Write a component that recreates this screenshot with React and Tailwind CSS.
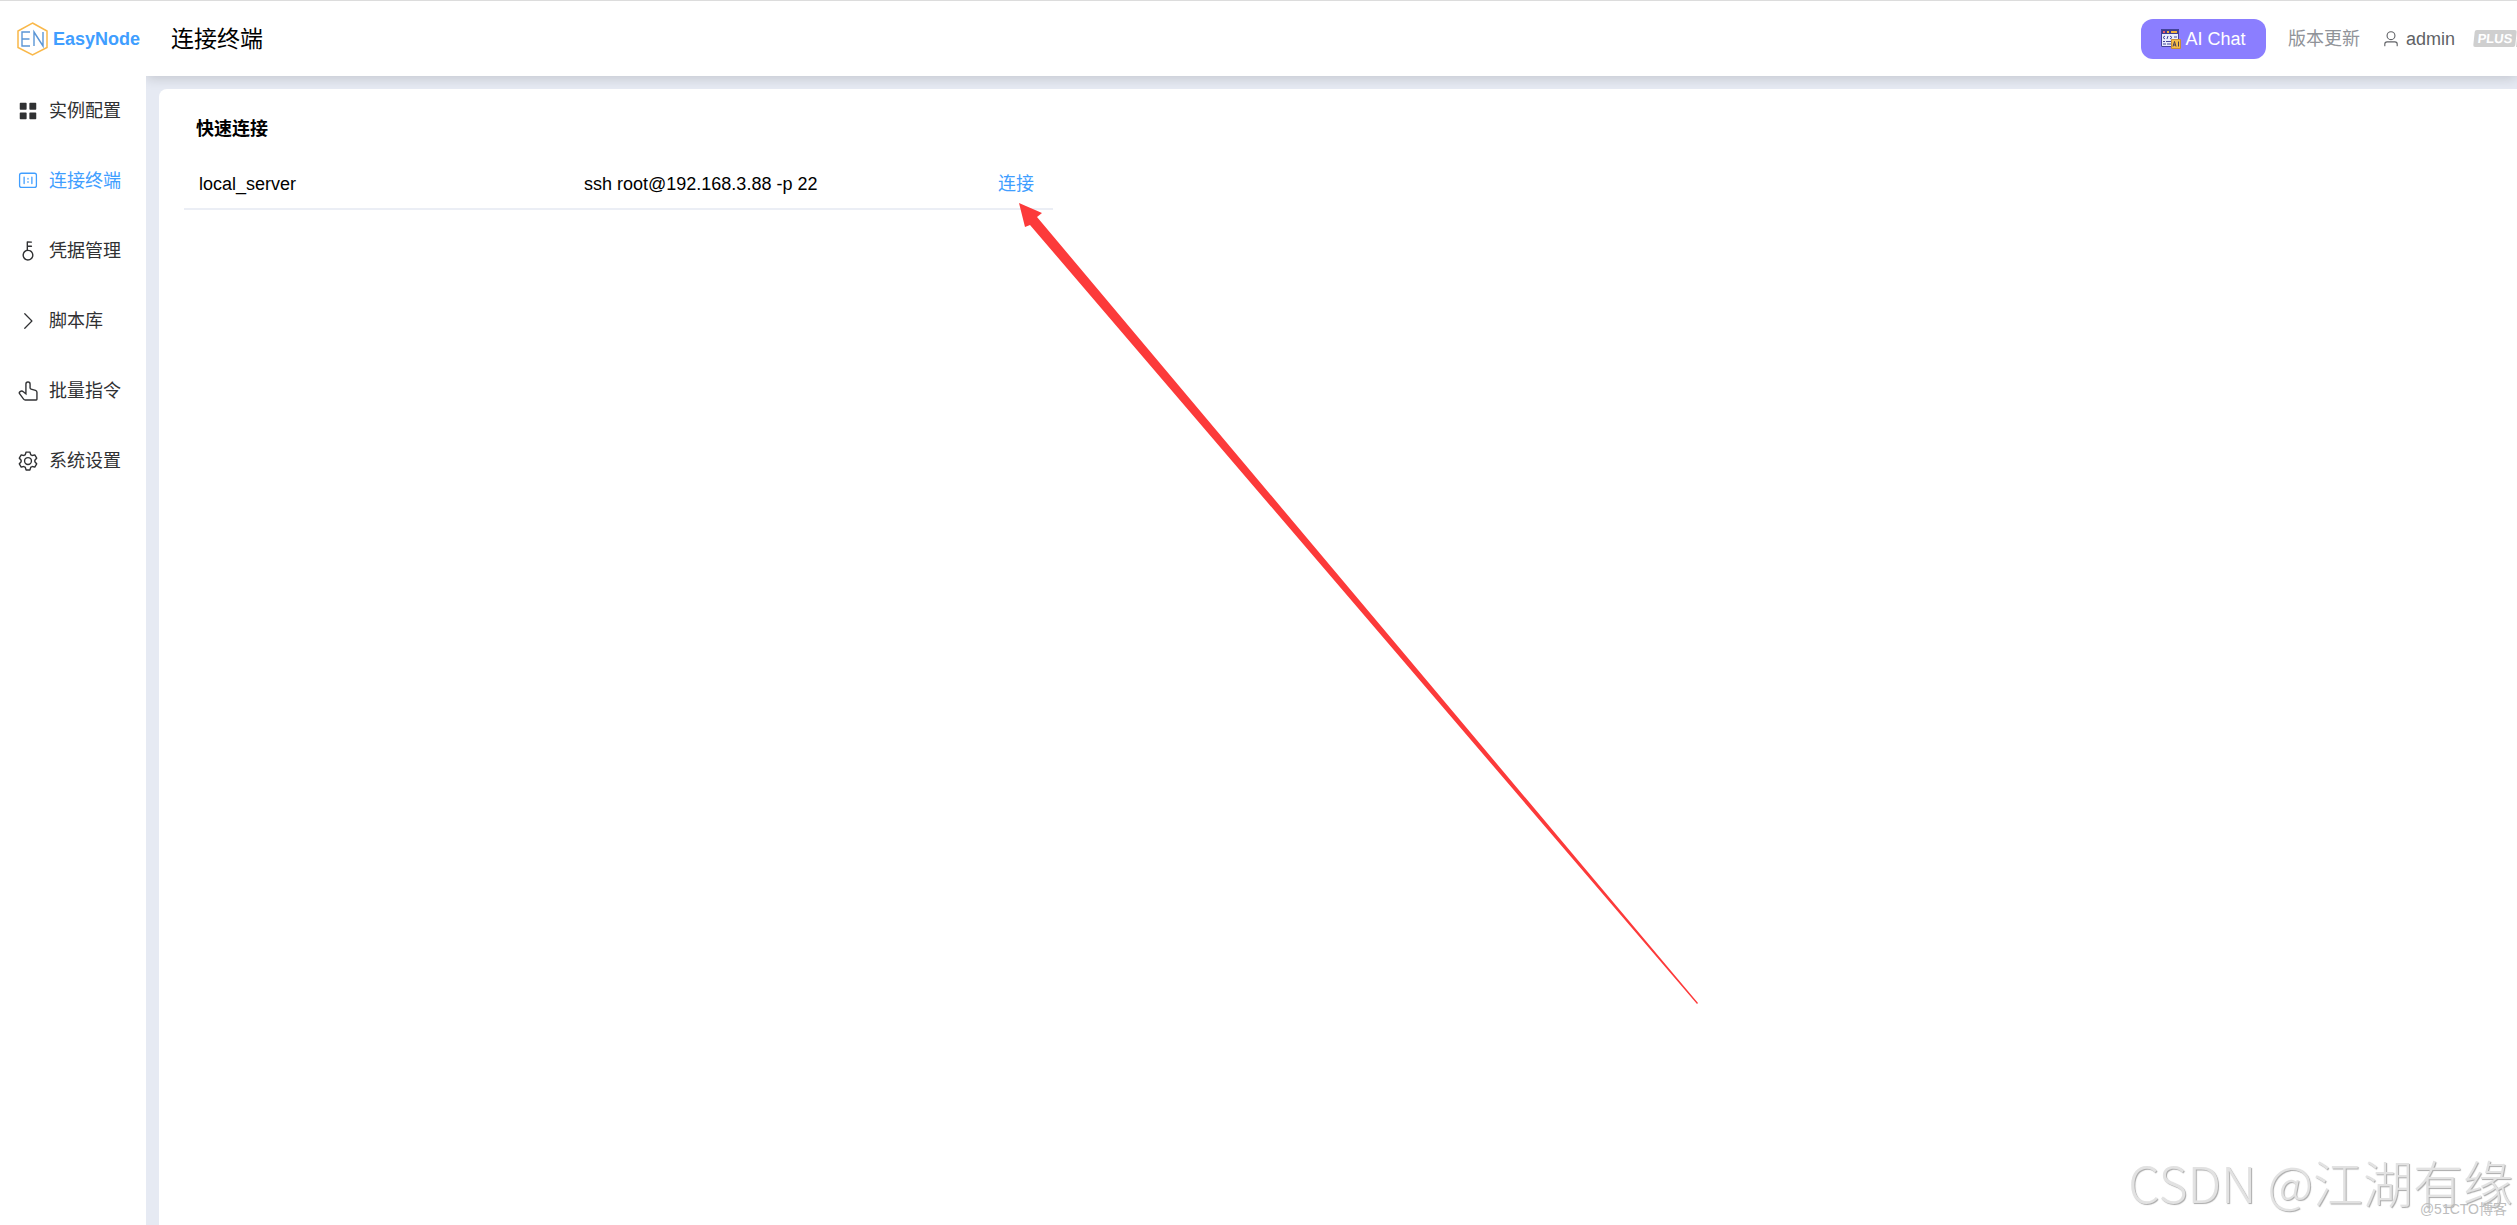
import React, { useState } from 'react';

// Iconos de Element Plus (viewBox 1024)
const icons = {
  menu: "M160 448a32 32 0 0 1-32-32V160a32 32 0 0 1 32-32h256a32 32 0 0 1 32 32v256a32 32 0 0 1-32 32H160zm448 0a32 32 0 0 1-32-32V160a32 32 0 0 1 32-32h256a32 32 0 0 1 32 32v256a32 32 0 0 1-32 32H608zM160 896a32 32 0 0 1-32-32V608a32 32 0 0 1 32-32h256a32 32 0 0 1 32 32v256a32 32 0 0 1-32 32H160zm448 0a32 32 0 0 1-32-32V608a32 32 0 0 1 32-32h256a32 32 0 0 1 32 32v256a32 32 0 0 1-32 32H608z",
  terminal: "M813.176 180.706a60.235 60.235 0 0 1 60.236 60.235v481.883a60.235 60.235 0 0 1-60.236 60.235H210.824a60.235 60.235 0 0 1-60.236-60.235V240.94a60.235 60.235 0 0 1 60.236-60.235h602.352zm0-60.235H210.824A120.47 120.47 0 0 0 90.353 240.94v481.883a120.47 120.47 0 0 0 120.47 120.47h602.353a120.47 120.47 0 0 0 120.471-120.47V240.94a120.47 120.47 0 0 0-120.47-120.47zm-120.47 180.705a30.118 30.118 0 0 0-30.118 30.118v301.177a30.118 30.118 0 0 0 60.236 0V331.294a30.118 30.118 0 0 0-30.118-30.118zm-361.412 0a30.118 30.118 0 0 0-30.118 30.118v301.177a30.118 30.118 0 0 0 60.236 0V331.294a30.118 30.118 0 0 0-30.118-30.118zM512 361.412a30.118 30.118 0 0 0-30.118 30.117v30.118a30.118 30.118 0 0 0 60.236 0V391.53A30.118 30.118 0 0 0 512 361.412zm0 150.588a30.118 30.118 0 0 0-30.118 30.118v30.117a30.118 30.118 0 0 0 60.236 0v-30.117A30.118 30.118 0 0 0 512 512z",
  key: "M448 456.064V96a32 32 0 0 1 32-32.064L672 64a32 32 0 0 1 0 64H512v128h160a32 32 0 0 1 0 64H512v128a256 256 0 1 1-64 8.064zM512 896a192 192 0 1 0 0-384 192 192 0 0 0 0 384z",
  arrow: "M340.864 149.312a30.592 30.592 0 0 0 0 42.752L652.736 512 340.864 831.872a30.592 30.592 0 0 0 0 42.752 29.12 29.12 0 0 0 41.728 0L714.24 534.336a32 32 0 0 0 0-44.672L382.592 149.376a29.12 29.12 0 0 0-41.728 0z",
  pointer: "M511.552 128c-35.584 0-64.384 28.8-64.384 64.448v516.48L274.048 570.88a94.272 94.272 0 0 0-112.896-3.456 44.416 44.416 0 0 0-8.96 62.208L332.8 870.4A64 64 0 0 0 384 896h512V575.232a64 64 0 0 0-45.632-61.312l-205.952-61.76A96 96 0 0 1 576 360.192V192.448C576 156.8 547.2 128 511.552 128zM359.04 556.8l24.128 19.2V192.448a128.448 128.448 0 1 1 256.832 0v167.744a32 32 0 0 0 22.784 30.656l206.016 61.824A128 128 0 0 1 960 575.232V896a64 64 0 0 1-64 64H384a128 128 0 0 1-102.4-51.2L101.056 668.032A108.416 108.416 0 0 1 128 512.512a158.272 158.272 0 0 1 185.984 8.32L359.04 556.8z",
  setting: "M600.704 64a32 32 0 0 1 30.464 22.208l35.2 109.376c14.784 7.232 28.928 15.36 42.432 24.512l112.384-24.192a32 32 0 0 1 34.432 15.36L944.32 364.8a32 32 0 0 1-4.032 37.504l-77.12 85.12a357.12 357.12 0 0 1 0 49.024l77.12 85.248a32 32 0 0 1 4.032 37.504l-88.704 153.6a32 32 0 0 1-34.432 15.296L708.8 803.904c-13.44 9.088-27.648 17.28-42.368 24.512l-35.264 109.376A32 32 0 0 1 600.704 960H423.296a32 32 0 0 1-30.464-22.208L357.696 828.48a351.616 351.616 0 0 1-42.56-24.64l-112.32 24.256a32 32 0 0 1-34.432-15.36L79.68 659.2a32 32 0 0 1 4.032-37.504l77.12-85.248a357.12 357.12 0 0 1 0-48.896l-77.12-85.248A32 32 0 0 1 79.68 364.8l88.704-153.6a32 32 0 0 1 34.432-15.296l112.32 24.256c13.568-9.152 27.776-17.408 42.56-24.64l35.2-109.312A32 32 0 0 1 423.232 64H600.64zm-23.424 64H446.72l-36.352 113.088-24.512 11.968a294.113 294.113 0 0 0-34.816 20.096l-22.656 15.36-116.224-25.088-65.28 113.152 79.68 88.192-1.92 27.136a293.12 293.12 0 0 0 0 40.192l1.92 27.136-79.808 88.192 65.344 113.152 116.224-25.024 22.656 15.296a294.113 294.113 0 0 0 34.816 20.096l24.512 11.968L446.72 896h130.688l36.48-113.152 24.448-11.904a288.282 288.282 0 0 0 34.752-20.096l22.592-15.296 116.288 25.024 65.28-113.152-79.744-88.192 1.92-27.136a293.12 293.12 0 0 0 0-40.256l-1.92-27.136 79.808-88.128-65.344-113.152-116.288 24.96-22.592-15.232a287.616 287.616 0 0 0-34.752-20.096l-24.448-11.904L577.344 128zM512 320a192 192 0 1 1 0 384 192 192 0 0 1 0-384zm0 64a128 128 0 1 0 0 256 128 128 0 0 0 0-256z",
  user: "M512 512a192 192 0 1 0 0-384 192 192 0 0 0 0 384zm0 64a256 256 0 1 1 0-512 256 256 0 0 1 0 512zm320 320v-96a96 96 0 0 0-96-96H288a96 96 0 0 0-96 96v96a32 32 0 1 1-64 0v-96a160 160 0 0 1 160-160h448a160 160 0 0 1 160 160v96a32 32 0 1 1-64 0z",
};

const Icon = ({ name, className }) => (
  <svg viewBox="0 0 1024 1024" fill="currentColor" className={className} aria-hidden="true">
    <path d={icons[name]} />
  </svg>
);

const Logo = () => (
  <svg viewBox="0 0 32 34" className="w-8 h-[34px] shrink-0" fill="none" aria-hidden="true">
    <path d="M15.500 1 L30 9 V25.500 L15.500 33 L1 25.500 V9 Z" stroke="#f9b84a" strokeWidth="1.500" />
    <path d="M13 10 H5 V24 H13 M5 17 H12.500 M17 24 V10 L26 24 V10" stroke="#5b96d6" strokeWidth="1.400" />
  </svg>
);

const ChatIcon = () => (
  <svg viewBox="0 0 20 20" className="w-5 h-5" aria-hidden="true">
    <path d="M0 0h18v18H0z" fill="#e9edfb" />
    <path d="M0 0h18v5H0z" fill="#3d3d91" />
    <path d="M2 2h2v2H2z" fill="#ef5b6c" />
    <path d="M6 2h2v2H6z" fill="#f1b13c" />
    <path d="M10 2h6v2h-6z" fill="#f1b13c" />
    <path d="M.5 .5h17v17H.5z" fill="none" stroke="#43439a" />
    <path d="M4 7L2 8.500 4 10M7 7L6 10M9 7l2 1.500L9 10M13 8h3M2 12.500h2m1 0h5M2 15h3m1 0h4" fill="none" stroke="#43439a" />
    <path d="M10.500 10.500h9v9h-9z" fill="#f5bd48" stroke="#c98d35" />
    <path d="M12 17.500l1.500-5 1.500 5M12.500 16h2M17.500 12.500v5" fill="none" stroke="#4a3d55" />
  </svg>
);

const menuItems = [
  { name: "实例配置", icon: "menu" },
  { name: "连接终端", icon: "terminal" },
  { name: "凭据管理", icon: "key" },
  { name: "脚本库", icon: "arrow" },
  { name: "批量指令", icon: "pointer" },
  { name: "系统设置", icon: "setting" },
];

const hosts = [
  { name: "local_server", command: "ssh root@192.168.3.88 -p 22" },
];

const App = () => {
  const [active, setActive] = useState(1);

  return (
    <div className="relative flex min-h-screen overflow-hidden border-t border-[#dcdcdc] bg-white text-lg leading-6 text-black font-['Liberation_Sans','Noto_Sans_CJK_SC',sans-serif]">
      {/* Barra lateral */}
      <aside className="relative z-10 w-[146px] shrink-0 bg-white">
        <div className="flex h-[75px] items-center gap-1 pl-[17px]">
          <Logo />
          <span className="font-bold text-[#409eff]">EasyNode</span>
        </div>
        <nav>
          {menuItems.map((item, index) => (
            <a
              key={item.name}
              href="#"
              onClick={() => setActive(index)}
              className={`flex h-[70px] items-center gap-2.5 pl-[17px] ${active === index ? 'text-[#409eff]' : 'text-[#303133]'}`}
            >
              <Icon name={item.icon} className="w-[22px] h-[22px] shrink-0" />
              {item.name}
            </a>
          ))}
        </nav>
      </aside>

      <div className="flex min-w-0 grow flex-col bg-[#e6eaf3]">
        {/* Cabecera */}
        <header className="flex h-[75px] shrink-0 items-center bg-white pl-[25px] shadow-[0_2px_12px_rgba(0,0,0,0.16)]">
          <h1 className="grow text-[23px]">{menuItems[active].name}</h1>
          <button className="flex h-10 w-[125px] items-center justify-center gap-1 rounded-xl bg-[#8b7eff] text-white">
            <ChatIcon />
            AI Chat
          </button>
          <button className="ml-[22px] text-[#909399]">版本更新</button>
          <button className="ml-[22px] flex items-center gap-1.5 text-[#606266]">
            <Icon name="user" className="w-[18px] h-[18px]" />
            admin
          </button>
          <span className="ml-[18px] flex h-[17px] w-11 shrink-0 gap-px overflow-hidden pl-px">
            <span className="flex w-[42px] shrink-0 -skew-x-6 items-center justify-center rounded-xs bg-[#cfcfcf] text-[13px] font-bold text-white">PLUS</span>
            <span className="w-2 shrink-0 -skew-x-6 bg-[#cfcfcf]"></span>
          </span>
        </header>

        <main className="ml-[13px] mt-[13px] grow rounded-tl-lg bg-white pl-[25px] pt-7">
          <h2 className="pl-3 font-bold">快速连接</h2>
          <table className="mt-[17px] w-[869px] table-fixed text-left">
            <tbody>
              {hosts.map((host) => (
                <tr key={host.name} className="h-[51px] border-b-2 border-[#ebeef5]">
                  <td className="w-[385px] pl-[15px] pt-0.5">{host.name}</td>
                  <td className="pl-[15px] pt-0.5">{host.command}</td>
                  <td className="w-[55px] pt-0.5">
                    <a href="#" className="text-[#409eff]">连接</a>
                  </td>
                </tr>
              ))}
            </tbody>
          </table>
        </main>
      </div>

      {/* Flecha que señala el enlace */}
      <svg viewBox="0 0 680 802" className="pointer-events-none absolute left-[1018px] top-[201px] w-[680px] h-[802px]" aria-hidden="true">
        <path d="M1 1 L24 11 L19 15 L680 801 L679 802 L12 23 L7 25 Z" fill="#fc3a3a" />
      </svg>

      {/* Marcas de agua */}
      <div className="pointer-events-none absolute bottom-4 right-1 font-['Noto_Sans_CJK_SC',sans-serif] font-light text-[50px] leading-[56px] text-[#e2e2e2] [text-shadow:1px_1px_1px_#aaaaaa]">CSDN @江湖有缘</div>
      <div className="pointer-events-none absolute bottom-1.5 right-2.5 text-sm leading-5 text-[#bdbdbd]">@51CTO博客</div>
    </div>
  );
};

export default App;
